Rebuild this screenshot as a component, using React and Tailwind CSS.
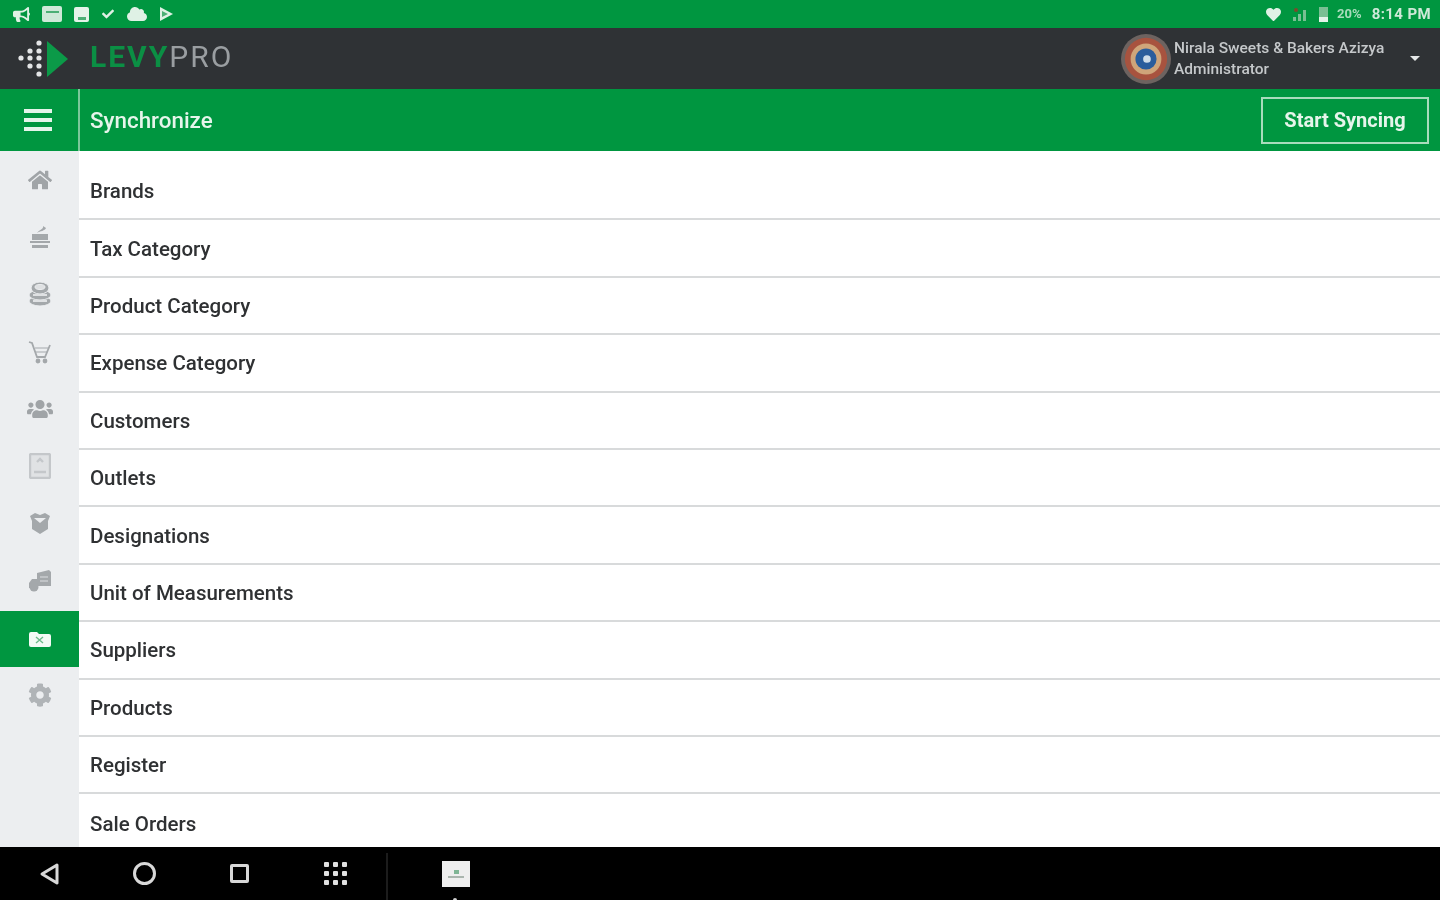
import {
  FaHome,
  FaUsers,
  FaCog,
  FaBullhorn,
  FaCheck,
  FaCloud,
  FaHeart,
} from "react-icons/fa";

const rows = [
  "Brands",
  "Tax Category",
  "Product Category",
  "Expense Category",
  "Customers",
  "Outlets",
  "Designations",
  "Unit of Measurements",
  "Suppliers",
  "Products",
  "Register",
  "Sale Orders",
];

const Pot = () => (
  <svg width="24" height="24" viewBox="0 0 24 24" fill="#a4a8ab">
    <path d="M15 1c1 3-4 4-6 7 3-2 8-2 9-5z" />
    <path d="M4 9h16v6H4z" />
    <path d="M2 16h20v2H2zM4 20h16v3H4z" />
  </svg>
);

const Coins = () => (
  <svg width="24" height="26" viewBox="0 0 24 26" fill="#a4a8ab" stroke="#eceef0" strokeWidth="1">
    <ellipse cx="12" cy="20" rx="11" ry="5" />
    <ellipse cx="12" cy="14" rx="11" ry="5" />
    <ellipse cx="12" cy="7" rx="9" ry="6" />
    <ellipse cx="12" cy="6" rx="5" ry="2.5" fill="#dfe1e3" />
    <path d="M5 14h14M5 20h14" stroke="#dfe1e3" strokeWidth="2" />
  </svg>
);

const Cart = () => (
  <svg width="24" height="24" viewBox="0 0 24 24" fill="none" stroke="#a4a8ab" strokeWidth="1.8">
    <path d="M1 2l3 1 5 14h8l5-12" />
    <path d="M7 8h14M8 12h11" strokeWidth="1.2" />
    <circle cx="10" cy="21" r="1.5" fill="#a4a8ab" />
    <circle cx="17" cy="21" r="1.5" fill="#a4a8ab" />
  </svg>
);

const Book = () => (
  <svg width="22" height="26" viewBox="0 0 22 26" fill="none" stroke="#c4c7ca" strokeWidth="2.4">
    <rect x="1" y="1" width="20" height="24" rx="1.5" fill="#e0e2e4" />
    <path d="M8 9l3-3 3 3M5 19h12" />
  </svg>
);

const Box = () => (
  <svg width="24" height="24" viewBox="0 0 24 24" fill="#a4a8ab">
    <path d="M2 5l5-3 5 2 5-2 5 3-2 5v8l-8 5-8-5v-8z" />
    <path d="M6 7h12l-6 5z" fill="#eceef0" />
  </svg>
);

const Truck = () => (
  <svg width="24" height="22" viewBox="0 0 24 22" fill="#a4a8ab">
    <path d="M9 3l12-3 2 2v14H9z" />
    <path d="M4 9h5v9H1v-5z" />
    <circle cx="6" cy="17" r="4.5" />
    <path d="M12 7h8M12 11h8" stroke="#c9cccf" strokeWidth="1.5" />
  </svg>
);

const Sync = () => (
  <svg width="24" height="18" viewBox="0 0 24 18">
    <path d="M1 4a2 2 0 012-2h6l2 2h10a2 2 0 012 2v9a2 2 0 01-2 2H3a2 2 0 01-2-2z" fill="#f3faf5" />
    <path d="M8 7l7 6M15 7l-7 6" stroke="#6cb98a" strokeWidth="1.4" />
  </svg>
);

const side = [
  <FaHome size={24} color="#a0a4a7" />,
  <Pot />,
  <Coins />,
  <Cart />,
  <FaUsers size={26} color="#a0a4a7" />,
  <Book />,
  <Box />,
  <Truck />,
  <Sync />,
  <FaCog size={24} color="#b0b4b7" />,
];

const Logo = () => {
  const dots = [
    [23, 3], [23, 11], [23, 18], [23, 26], [23, 34],
    [14, 11], [14, 18], [14, 26],
    [5, 18],
  ];
  return (
    <svg width="53" height="38" viewBox="0 0 53 38">
      {dots.map(([x, y]) => (
        <circle key={`${x}-${y}`} cx={x} cy={y} r="2.6" fill="#e3e5e6" />
      ))}
      <path d="M31 1l21 18-21 18z" fill="#0b9a48" />
    </svg>
  );
};

const Avatar = () => (
  <svg width="50" height="50" viewBox="0 0 52 52" className="shrink-0">
    <circle cx="26" cy="26" r="26" fill="#6d6360" />
    <circle cx="26" cy="26" r="22" fill="#a8533f" />
    <circle cx="26" cy="26" r="16" fill="#cfa57a" />
    <circle cx="26" cy="26" r="11" fill="#2a5d9c" />
    <circle cx="27" cy="26" r="4" fill="#cfdde9" />
  </svg>
);

export default function App() {
  return (
    <div className="w-[1440px] h-[900px] flex flex-col overflow-hidden bg-white blur-[0.7px] font-['Roboto',sans-serif]">
      {/* Status bar */}
      <div className="h-[28px] shrink-0 bg-[#009640] flex items-center justify-between pl-[13px] pr-[9px] text-[#dff1e5]">
        <div className="flex items-center gap-[12px]">
          <FaBullhorn size={17} />
          <div className="w-[20px] h-[16px] rounded-[2px] bg-[#cfe9d8] flex items-center justify-center">
            <div className="w-[13px] h-[6px] border-t-2 border-[#4caf75]" />
          </div>
          <div className="w-[15px] h-[15px] rounded-[2px] bg-[#e3f3e9] flex items-end justify-center pb-[2px]">
            <div className="w-[8px] h-[3px] bg-[#4caf75]" />
          </div>
          <FaCheck size={12} className="mx-[1px]" />
          <FaCloud size={20} />
          <svg width="15" height="16" viewBox="0 0 15 16" fill="#dff1e5">
            <path d="M1 1l13 7-13 7z" />
            <path d="M3 5l6 3-6 3z" fill="#4caf75" />
          </svg>
        </div>
        <div className="flex items-center text-[14px] font-bold">
          <FaHeart size={15} className="mr-[11px]" />
          <svg width="18" height="15" viewBox="0 0 18 15" className="mr-[9px]">
            <path d="M1 14h3v-4H1zM6 14h3V7H6zM11 14h3V3h-3z" fill="#79bf93" />
            <circle cx="4" cy="3" r="2" fill="#7a4b2c" />
          </svg>
          <div className="w-[9px] h-[15px] mr-[9px] bg-gradient-to-b from-[#79bf93] from-70% to-[#e3f3e9] to-70%" />
          <span className="text-[13px] mr-[10px] text-[#a9dcbc]">20%</span>
          <span className="text-[#cfe9d8] text-[15px] tracking-[0.4px]">8:14 PM</span>
        </div>
      </div>

      {/* App header */}
      <div className="h-[61px] shrink-0 bg-[#2f3235] flex items-center pl-[16px] pr-[20px]">
        <Logo />
        <div className="ml-[21px] -mt-[4px] text-[30px] tracking-[2px] leading-none">
          <span className="text-[#0b8f44] font-bold">LEVY</span>
          <span className="text-[#9a9ea1] font-normal">PRO</span>
        </div>
        <div className="ml-auto flex items-center">
          <Avatar />
          <div className="ml-[3px] w-[236px] text-[15.5px] leading-[21px] font-medium text-[#c5c8ca]">
            <div>Nirala Sweets &amp; Bakers Azizya</div>
            <div>Administrator</div>
          </div>
          <div className="w-0 h-0 border-x-[5px] border-x-transparent border-t-[5px] border-t-[#e5e7e8]" />
        </div>
      </div>

      {/* Toolbar */}
      <div className="h-[62px] shrink-0 bg-[#009640] flex items-stretch text-[#e6f5eb]">
        <div className="w-[80px] shrink-0 border-r-2 border-[#7cc79a] flex flex-col items-center justify-center gap-[5px] pr-[2px]">
          <div className="w-[28px] h-[4px] bg-[#e6f5eb]" />
          <div className="w-[28px] h-[4px] bg-[#e6f5eb]" />
          <div className="w-[28px] h-[4px] bg-[#e6f5eb]" />
        </div>
        <div className="pl-[10px] pt-[2px] flex items-center text-[22.4px] font-medium">Synchronize</div>
        <div className="ml-auto pr-[11px] flex items-center">
          <button className="w-[168px] h-[47px] border-2 border-[#a9dcbc] text-[20px] font-bold">Start Syncing</button>
        </div>
      </div>

      {/* Body */}
      <div className="flex-1 min-h-0 flex">
        <div className="w-[79px] shrink-0 bg-[#eceef0] flex flex-col">
          {side.map((icon, i) => (
            <div
              key={i}
              className={`shrink-0 flex items-center justify-center ${i === 8 ? "bg-[#009640] h-[56px] mt-[1.5px] -mb-[0.2px]" : "h-[57.3px]"}`}
            >
              {icon}
            </div>
          ))}
        </div>
        <div className="flex-1 pt-[12px] overflow-hidden">
          {rows.map((r) => (
            <div
              key={r}
              className="h-[57.4px] box-border border-b-2 border-[#d8dadb] pl-[11px] pt-[2px] flex items-center text-[20.5px] font-medium text-[#2f3133] last:border-b-0"
            >
              {r}
            </div>
          ))}
        </div>
      </div>

      {/* Android nav */}
      <div className="h-[53px] shrink-0 bg-black flex items-center relative">
        <svg width="22" height="24" viewBox="0 0 22 24" fill="none" stroke="#d8d8d8" strokeWidth="3" className="ml-[39px]">
          <path d="M18 3L3 12l15 9z" strokeLinejoin="round" />
        </svg>
        <div className="ml-[72px] w-[23px] h-[23px] rounded-full border-[3px] border-[#d8d8d8]" />
        <div className="ml-[74px] w-[19px] h-[19px] border-[3px] border-[#d8d8d8] rounded-[2px]" />
        <div className="ml-[75px] grid grid-cols-3 gap-x-[4px] gap-y-[4px]">
          {Array.from({ length: 9 }).map((_, i) => (
            <div key={i} className="w-[5px] h-[5px] bg-[#e0e0e0] rounded-[1px]" />
          ))}
        </div>
        <div className="ml-[39px] w-[2px] h-[47px] self-end bg-[#1c1c1c]" />
        <div className="ml-[54px] w-[28px] h-[26px] bg-[#eeeeee] flex flex-col items-center justify-center gap-[2px]">
          <div className="w-[5px] h-[4px] bg-[#7fb595]" />
          <div className="w-[16px] h-[2px] bg-[#aab5ae]" />
        </div>
        <div className="absolute left-[453px] bottom-0 w-[4px] h-[2px] rounded-t-full bg-[#cfcfcf]" />
      </div>
    </div>
  );
}
